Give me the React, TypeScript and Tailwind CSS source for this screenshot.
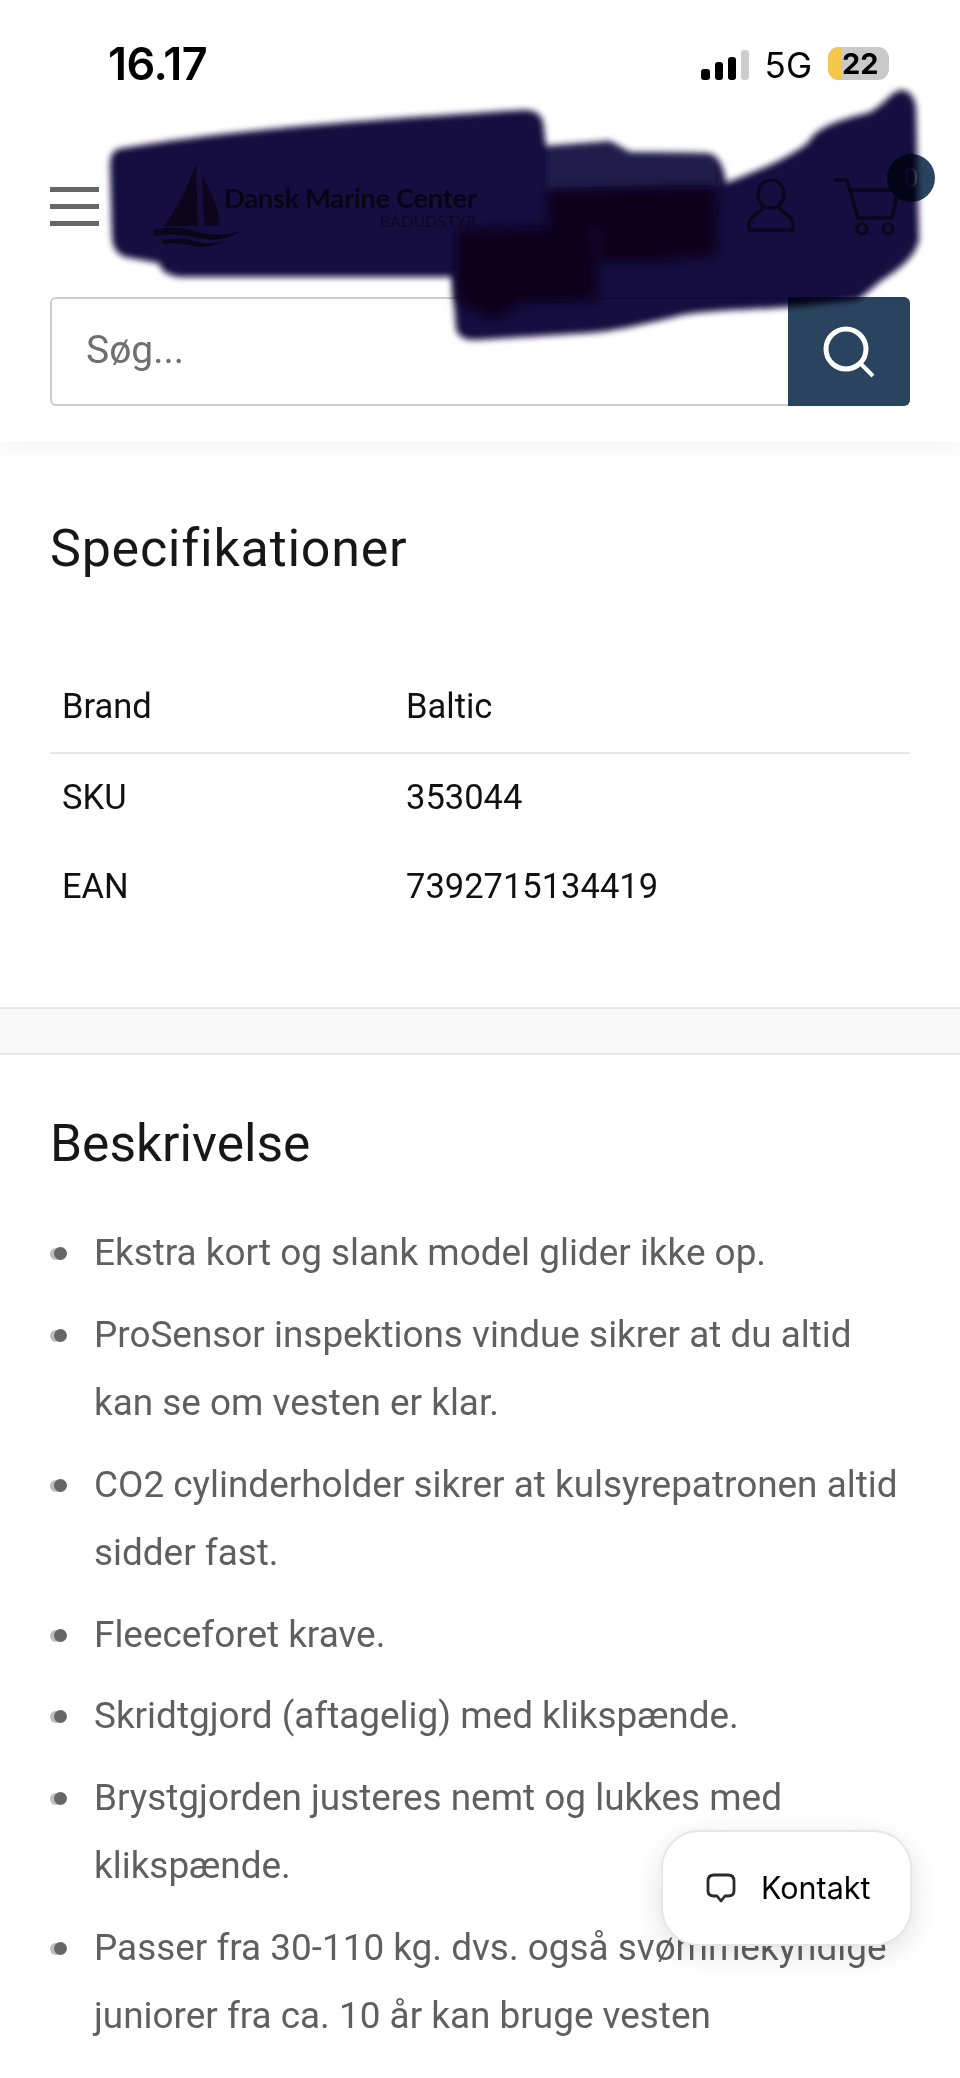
const items = [
  ["Ekstra kort og slank model glider ikke op."],
  ["ProSensor inspektions vindue sikrer at du altid", "kan se om vesten er klar."],
  ["CO2 cylinderholder sikrer at kulsyrepatronen altid", "sidder fast."],
  ["Fleeceforet krave."],
  ["Skridtgjord (aftagelig) med klikspænde."],
  ["Brystgjorden justeres nemt og lukkes med", "klikspænde."],
  ["Passer fra 30-110 kg. dvs. også svømmekyndige", "juniorer fra ca. 10 år kan bruge vesten"],
];

const specs = [
  ["Brand", "Baltic"],
  ["SKU", "353044"],
  ["EAN", "7392715134419"],
];

function Blob() {
  return (
    <svg className="absolute left-0 top-0 mix-blend-multiply pointer-events-none" width="960" height="360" viewBox="0 0 960 360">
      <defs>
        <filter id="soft" x="-5%" y="-5%" width="110%" height="110%">
          <feGaussianBlur stdDeviation="3" />
        </filter>
        <filter id="softer" x="-10%" y="-10%" width="120%" height="120%">
          <feGaussianBlur stdDeviation="5" />
        </filter>
      </defs>
      <g filter="url(#soft)">
        <path
          d="M118 149 C240 128 400 118 524 110 Q540 110 543 122 L546 146 L610 141 L630 152 L708 153 Q722 155 726 183 C760 170 785 160 808 143 C815 130 830 122 868 113 C885 105 892 90 902 90 Q915 92 916 110 L919 240 Q915 260 882 280 L858 300 L790 307 C750 310 700 310 674 317 C640 325 610 332 588 333 L475 340 Q458 340 456 328 L452 277 L180 277 Q162 275 159 263 L125 257 Q112 252 112 235 L110 165 Q110 152 118 149 Z"
          fill="#170a40"
        />
        <path d="M548 146 L610 141 L630 152 L708 153 Q718 155 718 187 L548 190 Z" fill="#241a4c" />
      </g>
      <g filter="url(#softer)">
        <path d="M548 190 L712 186 Q718 190 716 255 L660 261 L598 262 L598 230 L548 228 Z" fill="#08041f" />
        <path d="M456 230 L590 226 Q597 228 597 300 L520 303 L500 318 Q490 322 478 312 L456 300 Z" fill="#08041f" />
      </g>
    </svg>
  );
}

export default function App() {
  return (
    <div className="relative h-[2078px] w-[960px] overflow-hidden bg-white font-['Roboto',sans-serif]">
      <header className="relative h-[442px] bg-white px-[50px] shadow-[0_6px_22px_rgba(0,0,0,0.05)]">
        <div className="flex h-[80px] items-end font-['Inter',sans-serif] text-black">
          <div className="ml-[58px] text-[45px] font-semibold leading-[33px] tracking-[-0.5px]">16.17</div>
          <div className="ml-auto flex items-end">
            <div className="flex items-end gap-[5px]">
              <span className="h-[11px] w-[9px] rounded-[3px] bg-black" />
              <span className="h-[18px] w-[8px] rounded-[3px] bg-black" />
              <span className="h-[23px] w-[8px] rounded-[3px] bg-black" />
              <span className="h-[30px] w-[8px] rounded-[3px] bg-[#cdcdcd]" />
            </div>
            <div className="ml-[16px] text-[35px] font-normal leading-[30px]">5G</div>
            <div className="relative ml-[16px] mr-[21px] flex h-[33px] w-[61px] items-center overflow-hidden rounded-[11px] bg-[#c9c9c9]">
              <span className="h-full w-[13px] bg-[#f4c64a]" />
              <span className="ml-[1px] text-[29px] font-bold leading-none">22</span>
            </div>
          </div>
        </div>

        <div className="mt-[80px] flex h-[92px] items-center">
          <div className="flex w-[49px] flex-col gap-[12px]">
            <span className="h-[5px] bg-[#666666]" />
            <span className="h-[5px] bg-[#666666]" />
            <span className="h-[5px] bg-[#666666]" />
          </div>
          <svg className="ml-[55px] opacity-90" width="89" height="84" viewBox="0 0 89 84">
            <path d="M42 0 L44 62 L10 62 Q28 38 42 0 Z M48 12 L50 62 L66 62 Q64 36 48 12 Z" fill="#7a5a60" />
            <path d="M0 66 Q20 60 44 68 Q66 74 89 66 Q66 80 44 74 Q20 68 0 72 Z M8 76 Q28 72 44 78 Q58 82 72 76 Q56 86 40 82 Q24 78 8 80 Z" fill="#555555" />
          </svg>
          <div className="-ml-[19px] flex flex-col items-end font-['Lato',sans-serif] text-[#505050] blur-[0.6px]">
            <div className="whitespace-nowrap text-[27.5px] font-bold leading-[30px] tracking-[-0.4px]">Dansk Marine Center</div>
            <div className="text-[15.5px] leading-[16px] tracking-[0.5px] text-[#8a8a8a]">BÅDUDSTYR</div>
          </div>
          <div className="ml-auto flex items-center">
            <svg width="50" height="54" viewBox="0 0 50 54" fill="none" stroke="#707070" strokeWidth="3.5">
              <ellipse cx="25" cy="15" rx="13" ry="14" />
              <path d="M17 27 C17 34 4 35 3 44 L3 51 L47 51 L47 44 C46 35 33 34 33 27" />
            </svg>
            <div className="relative ml-[38px] mr-[10px]">
              <svg width="66" height="60" viewBox="0 0 66 60" fill="none" stroke="#707070" strokeWidth="3.5">
                <path d="M0 4 L13 4 L24 42 L58 42 L64 14 L17 14" />
                <circle cx="28" cy="53" r="5" />
                <circle cx="54" cy="53" r="5" />
              </svg>
              <span className="absolute -right-[35px] -top-[22px] flex h-[48px] w-[48px] items-center justify-center rounded-full bg-[#2a4460] text-[26px] text-[#9aaaba]">0</span>
            </div>
          </div>
        </div>

        <div className="mt-[45px] flex h-[109px]">
          <input
            readOnly
            placeholder="Søg..."
            className="h-full min-w-0 flex-1 rounded-l-[6px] border-2 border-r-0 border-[#cccccc] bg-white pb-[4px] pl-[34px] text-[39px] text-[#6f6f6f] outline-none placeholder:text-[#6f6f6f]"
          />
          <button className="flex h-full w-[122px] items-center justify-center rounded-r-[6px] bg-[#2a4460]">
            <svg width="54" height="52" viewBox="0 0 54 52" fill="none" stroke="white" strokeWidth="5">
              <circle cx="24" cy="23" r="20" />
              <path d="M38 37 L51 50" strokeWidth="4" />
            </svg>
          </button>
        </div>
      </header>

      <section className="px-[50px] pt-[77px]">
        <h2 className="text-[52px] font-normal leading-[60px] tracking-[0.75px] text-[#171717] [font-variant-ligatures:none]">Specifikationer</h2>
        <table className="mt-[83px] w-full border-collapse text-[34.5px] text-[#111111]">
          <tbody>
            {specs.map(([k, v], i) => (
              <tr key={k} className={i === 0 ? "h-[91px] border-b-2 border-[#e6e6e6]" : "h-[89px]"}>
                <td className="w-[356px] pl-[12px]">{k}</td>
                <td>{v}</td>
              </tr>
            ))}
          </tbody>
        </table>
      </section>

      <div className="mt-[76px] h-[48px] border-y-2 border-[#e8e8e8] bg-[#f8f8f8]" />

      <section className="px-[50px] pt-[59px]">
        <h2 className="text-[51.5px] font-normal leading-[60px] text-[#171717]">Beskrivelse</h2>
        <ul className="mt-[45px] flex flex-col gap-[13px] text-[36.9px] leading-[68.5px] text-[#5f5f5f]">
          {items.map((lines) => (
            <li key={lines[0]} className="relative pl-[44px]">
              <span className="absolute left-[0px] top-[29px] h-[12px] w-[12px] rounded-full bg-[#bdbdbd]" />
              <span className="absolute left-[4px] top-[28px] h-[13px] w-[13px] rounded-full bg-[#666666]" />
              {lines.map((l) => (
                <div key={l} className="whitespace-nowrap">{l}</div>
              ))}
            </li>
          ))}
        </ul>
      </section>

      <button className="absolute left-[661px] top-[1830px] flex h-[116px] w-[251px] items-center rounded-[38px] border-2 border-[#e6e6e6] bg-white pl-[43px] font-['Inter',sans-serif] text-black shadow-[0_8px_28px_rgba(0,0,0,0.12)]">
        <svg width="30" height="30" viewBox="0 0 30 30" fill="none" stroke="#2b2b2b" strokeWidth="2.8" strokeLinejoin="round">
          <path d="M8 2 L22 2 Q28 2 28 8 L28 18 Q28 23 22 23 L19 23 L15 28 L11 23 L8 23 Q2 23 2 18 L2 8 Q2 2 8 2 Z" />
        </svg>
        <span className="ml-[25px] text-[30.5px] leading-none">Kontakt</span>
      </button>

      <Blob />
    </div>
  );
}
